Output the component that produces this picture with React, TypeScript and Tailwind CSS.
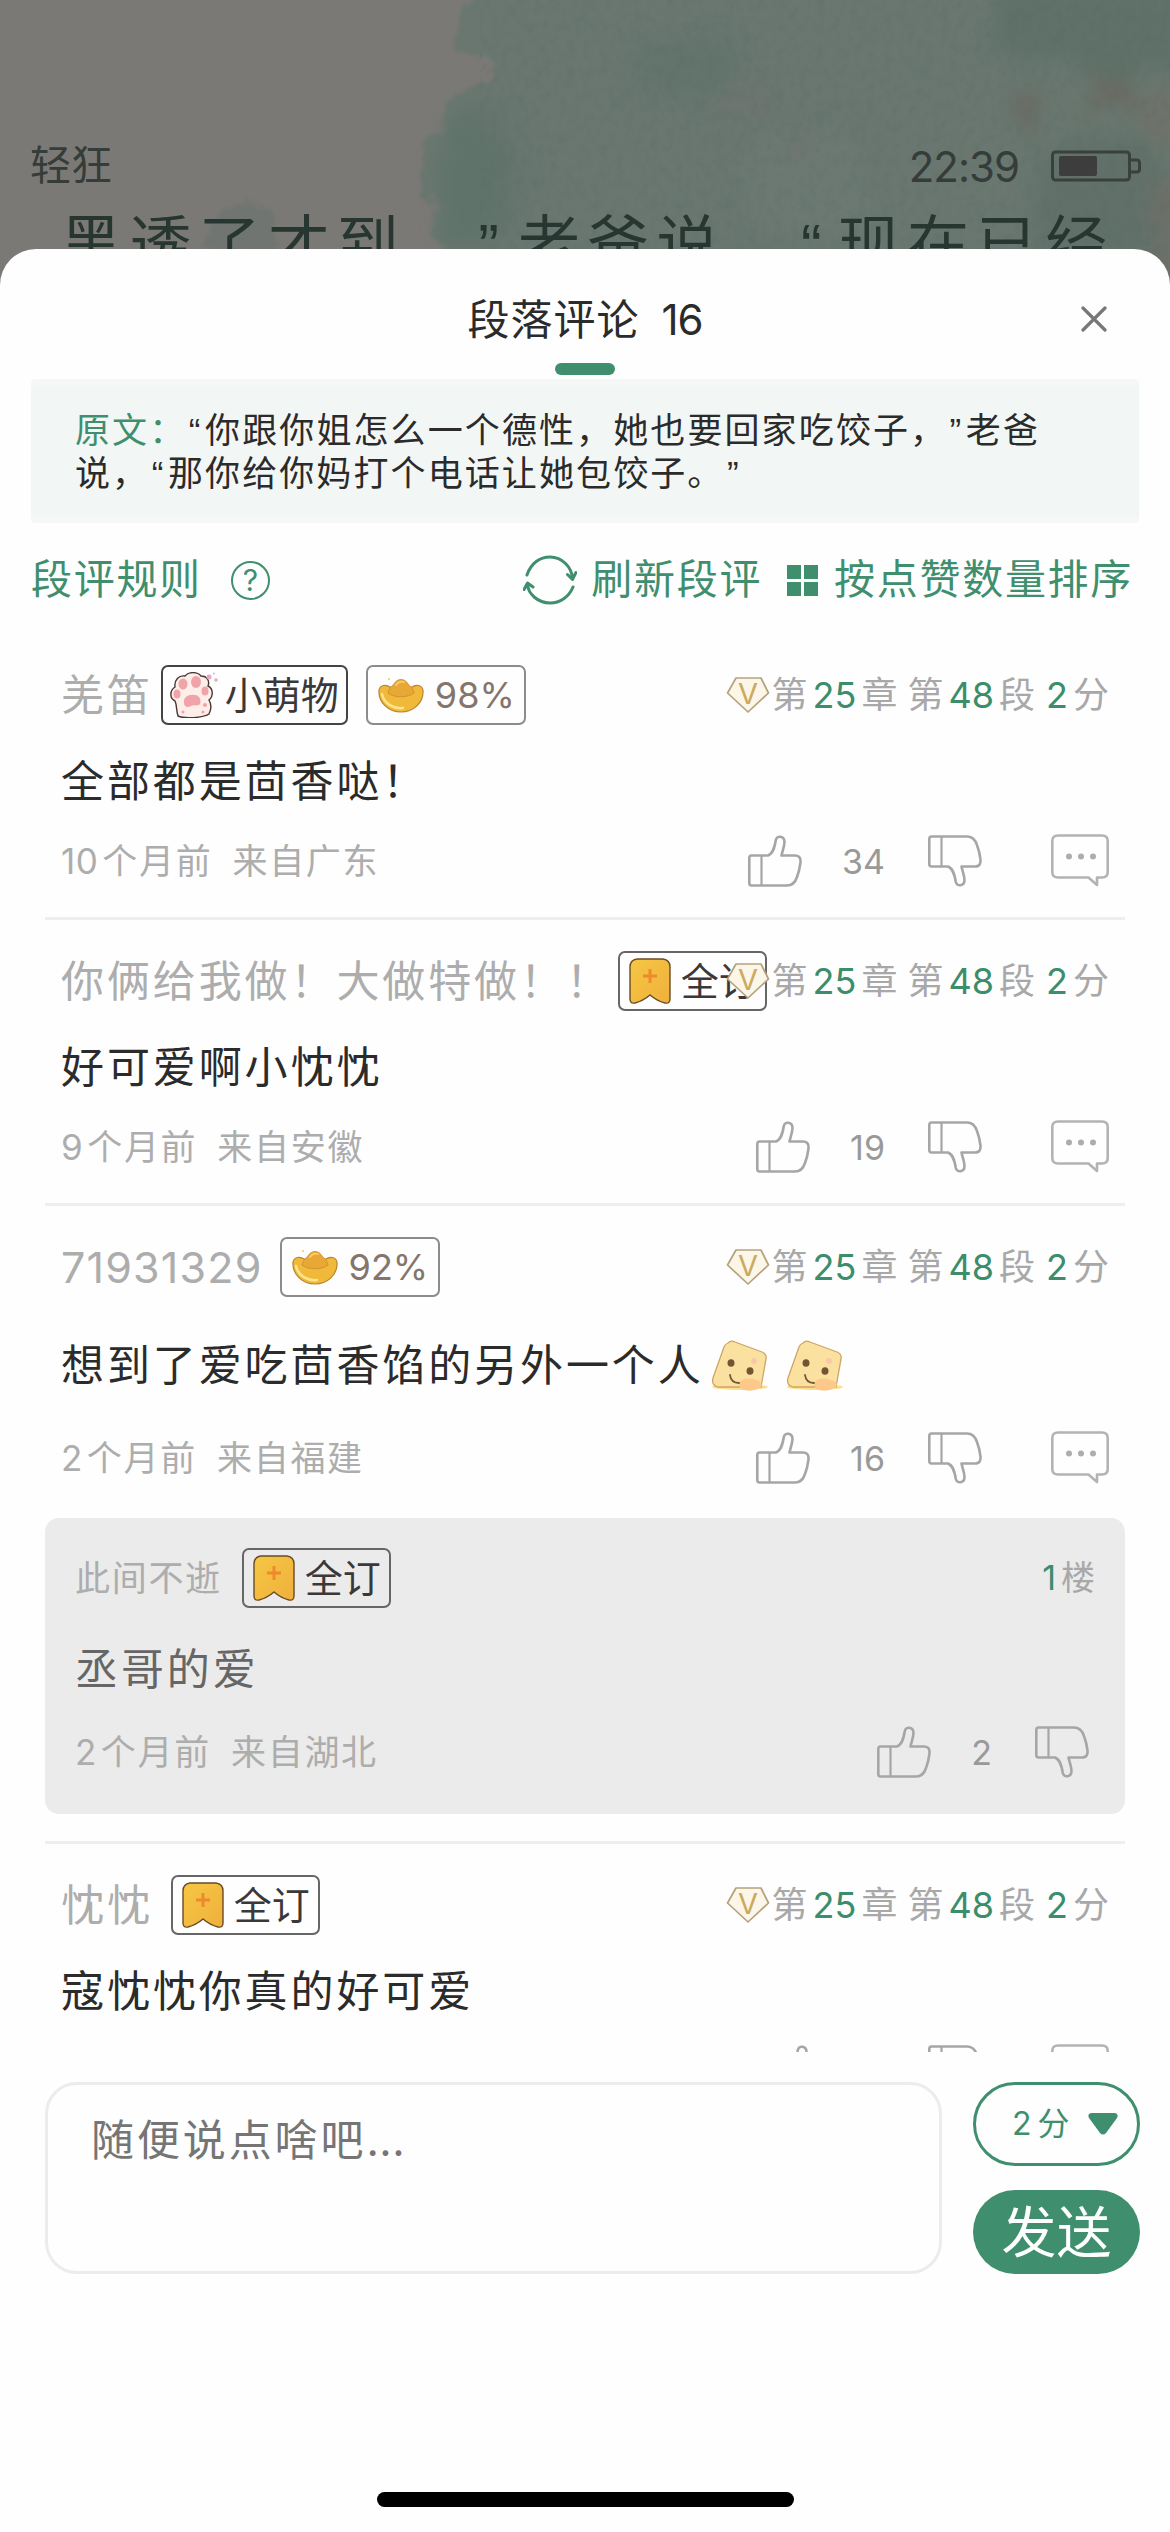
import type { ReactNode } from "react";

type TagKind = "paw" | "ingot" | "bookmark";

interface Tag {
    kind: TagKind;
    label: string;
}

interface Comment {
    name: string;
    tagGap: string;
    tags: Tag[];
    text: string;
    faces?: number;
    months: number;
    place: string;
    likes: number;
    reply?: Comment;
}

const comments: Comment[] = [
    {
        name: "羌笛",
        tagGap: "ml-2",
        tags: [{ kind: "paw", label: "小萌物" }, { kind: "ingot", label: "98%" }],
        text: "全部都是茴香哒！",
        months: 10,
        place: "广东",
        likes: 34,
    },
    {
        name: "你俩给我做！大做特做！！",
        tagGap: "ml-[6px]",
        tags: [{ kind: "bookmark", label: "全订" }],
        text: "好可爱啊小忱忱",
        months: 9,
        place: "安徽",
        likes: 19,
    },
    {
        name: "71931329",
        tagGap: "ml-[17px]",
        tags: [{ kind: "ingot", label: "92%" }],
        text: "想到了爱吃茴香馅的另外一个人",
        faces: 2,
        months: 2,
        place: "福建",
        likes: 16,
        reply: {
            name: "此间不逝",
            tagGap: "ml-[20px]",
            tags: [{ kind: "bookmark", label: "全订" }],
            text: "丞哥的爱",
            months: 2,
            place: "湖北",
            likes: 2,
        },
    },
    {
        name: "忱忱",
        tagGap: "ml-[18px]",
        tags: [{ kind: "bookmark", label: "全订" }],
        text: "寇忱忱你真的好可爱",
        months: 1,
        place: "江苏",
        likes: 9,
    },
];

const ThumbUp = ({ className = "" }: { className?: string }) => (
    <svg viewBox="0 0 54 52" className={`h-[52px] w-[54px] shrink-0 ${className}`} fill="none" stroke="#a6a6a6" strokeWidth="2.6" strokeLinejoin="round">
        <path d="M3.5 20.5H20C25 18.5 26.5 13 27.8 5C28.8 0 36.5 0.8 36.5 7C36.3 12 34.5 15.5 33.5 20.5H47C51.5 20.5 53 23.5 52.4 28C51.8 33 50.5 38 49 42C47.2 47.5 44.5 50.5 39 50.5H3.5Q1.3 50.5 1.3 48V23Q1.3 20.5 3.5 20.5Z" />
        <path d="M13.5 20.5V50.5" strokeWidth="2.2" />
    </svg>
);

const ThumbDown = () => <ThumbUp className="-scale-y-100" />;

const Bubble = () => (
    <svg viewBox="0 0 58 54" className="h-[54px] w-[58px] shrink-0" fill="none" stroke="#b3b3b3" strokeWidth="2.6">
        <path d="M7 1.5H51Q56.7 1.5 56.7 7V38Q56.7 43.5 51 43.5H46V51L37.5 43.5H7Q1.3 43.5 1.3 38V7Q1.3 1.5 7 1.5Z" strokeLinejoin="round" />
        <g fill="#adadad" stroke="none">
            <circle cx="18" cy="22.5" r="3" />
            <circle cx="30" cy="22.5" r="3" />
            <circle cx="42" cy="22.5" r="3" />
        </g>
    </svg>
);

const Paw = () => (
    <svg viewBox="0 0 49 46" className="mr-[6px] h-[46px] w-[49px]">
        <path d="M8 44C6 38 7 33 5 29C-1 26 0 18 5 15C4 8 9 3 15 4C19 -1 28 0 31 4C37 4 40 9 38 14C44 17 43 25 39 28C42 33 41 38 39 42C33 46 14 47 8 44Z" fill="#fdeeea" stroke="#4a3434" strokeWidth="1.4" />
        <g fill="#f0a3a8">
            <ellipse cx="13" cy="12" rx="4.5" ry="5.5" />
            <ellipse cx="26" cy="10" rx="5" ry="6" />
            <ellipse cx="7" cy="22" rx="3.5" ry="4.5" />
            <ellipse cx="35" cy="19" rx="3.5" ry="4.5" />
            <path d="M14 31C13 25 19 22 24 23C29 22 32 28 30 32C27 35 23 32 21 34C18 36 14 35 14 31Z" />
            <circle cx="35" cy="33" r="2" />
            <circle cx="33" cy="40" r="1.5" />
            <circle cx="13" cy="40" r="1.5" />
        </g>
        <g fill="#e3a9c6">
            <circle cx="39" cy="5" r="2.5" />
            <circle cx="46" cy="8" r="1.8" />
            <circle cx="44" cy="1.5" r="1" />
        </g>
    </svg>
);

const Ingot = () => (
    <svg viewBox="0 0 46 36" className="mr-[11px] h-[36px] w-[46px]">
        <path d="M1 13C2 8 8 7 12 10H34C38 7 44 8 45 13C46 26 35 35 23 35C11 35 0 26 1 13Z" fill="#f0b93a" stroke="#bb8430" strokeWidth="1.2" />
        <path d="M10 16C11 11 14 9 16 7C19 1 27 1 30 7C32 9 35 11 36 16C30 21 16 21 10 16Z" fill="#e8a835" stroke="#c98a2b" strokeWidth="0.8" />
        <path d="M4 17C6 27 16 32 25 31" fill="none" stroke="#fde58c" strokeWidth="2.5" strokeLinecap="round" />
        <path d="M18 8C20 5 23 4 26 5" fill="none" stroke="#f8cf6b" strokeWidth="1.8" strokeLinecap="round" />
        <circle cx="11" cy="2" r="1" fill="#f3c65c" />
    </svg>
);

const Bookmark = () => (
    <svg viewBox="0 0 42 46" className="mr-[10px] h-[46px] w-[42px]">
        <defs>
            <linearGradient id="mark" x1="0" x2="1" y1="0" y2="1">
                <stop offset="0" stopColor="#f6c744" />
                <stop offset="1" stopColor="#efb03c" />
            </linearGradient>
        </defs>
        <path d="M8 1H34Q41 2 41 9V41Q41 46 36 45Q28 43 21 37Q14 43 6 45Q1 46 1 41V9Q1 2 8 1Z" fill="url(#mark)" stroke="#6b4a26" strokeWidth="1.4" />
        <path d="M21 11V25M14 18H28" stroke="#ee8a2c" strokeWidth="3" />
    </svg>
);

const Face = () => (
    <svg viewBox="0 0 58 52" className="h-[52px] w-[58px]">
        <ellipse cx="29" cy="47" rx="28" ry="3" fill="#fbdf8f" />
        <path d="M17 3Q20 0 24 2L51 12Q56 14 55 19L50 47H7Q0 45 2 38L13 7Q14 4 17 3Z" fill="#fbe1a0" stroke="#cfa565" strokeWidth="1.3" />
        <path d="M27 43Q34 36 45 40Q54 43 49 48Q40 53 30 49Z" fill="#fcc98b" />
        <ellipse cx="20" cy="23" rx="3.5" ry="3.8" fill="#745532" />
        <ellipse cx="39" cy="31" rx="3.5" ry="3.8" fill="#745532" />
        <path d="M19 35Q20 43 28 43" fill="none" stroke="#745532" strokeWidth="1.8" strokeLinecap="round" />
        <circle cx="43" cy="21" r="3" fill="#f9c8a6" />
    </svg>
);

const Gem = () => (
    <svg viewBox="0 0 44 38" className="h-[38px] w-[44px]">
        <path d="M10 2H35L42.5 17L22 36L1.5 17Z" fill="#fbf6e8" stroke="#b5a27c" strokeWidth="1.7" strokeLinejoin="round" />
        <text x="22" y="28" textAnchor="middle" fontSize="29" fontFamily="Inter" fill="#ccaa5c">V</text>
    </svg>
);

const tagIcons: Record<TagKind, ReactNode> = {
    paw: <Paw />,
    ingot: <Ingot />,
    bookmark: <Bookmark />,
};

const tagStyles: Record<TagKind, string> = {
    paw: "w-[187px] border-[#444] pl-[7px] text-[38px] text-[#3c3838]",
    ingot: "w-[160px] border-[#8c8c8c] pl-[10px] text-[36px] text-[#85756a]",
    bookmark: "w-[149px] border-[#666] pl-[9px] text-[38px] text-[#3c3838]",
};

const TagBadge = ({ kind, label }: Tag) => (
    <span className={`flex h-[60px] shrink-0 items-center rounded-[7px] border-2 leading-none whitespace-nowrap ${tagStyles[kind]}`}>
        {tagIcons[kind]}
        {label}
    </span>
);

const Num = ({ children }: { children: ReactNode }) => <span className="mx-[5px] text-[#3b8d6c]">{children}</span>;

const Chapter = () => (
    <div className="z-10 col-start-1 row-start-1 flex items-center justify-self-end text-[36px] leading-none text-[#a8a8a8]">
        <Gem />
        <span className="ml-[2px]">第</span>
        <Num>25</Num>
        <span>章</span>
        <span className="ml-[10px]">第</span>
        <Num>48</Num>
        <span>段</span>
        <span className="ml-[6px]"><Num>2</Num></span>
        <span>分</span>
    </div>
);

const nameStyle = (name: string, isReply: boolean) => {
    if (isReply) return "text-[35px] tracking-[1.7px]";
    return /^\d+$/.test(name) ? "text-[43px] tracking-[1.2px]" : "text-[43px] tracking-[2.9px]";
};

const textStyle = (comment: Comment, isReply: boolean) => {
    if (isReply) return "mt-[32px] h-[58px] text-[#666]";
    return comment.faces ? "mt-[27px] h-[83px] text-[#2b2b2b]" : "mt-[27px] h-[58px] text-[#2b2b2b]";
};

const CommentBody = ({ comment, isReply = false }: { comment: Comment; isReply?: boolean }) => (
    <>
        <div className="grid h-[60px] grid-cols-1 grid-rows-[60px] items-center">
            <div className="col-start-1 row-start-1 flex items-center">
                <span className={`leading-none whitespace-nowrap text-[#adadad] ${nameStyle(comment.name, isReply)}`}>
                    {comment.name}
                </span>
                <div className={`flex gap-[18px] ${comment.tagGap}`}>
                    {comment.tags.map((tag) => <TagBadge key={tag.label} {...tag} />)}
                </div>
            </div>
            {isReply ? (
                <div className="col-start-1 row-start-1 justify-self-end text-[34px] leading-none text-[#a8a8a8]">
                    <Num>1</Num>楼
                </div>
            ) : <Chapter />}
        </div>
        <div className={`flex items-center text-[43px] tracking-[2.9px] ${textStyle(comment, isReply)}`}>
            {comment.text}
            {comment.faces && (
                <span className="ml-[7px] flex gap-[17px]">
                    {Array.from({ length: comment.faces }, (_, i) => <Face key={i} />)}
                </span>
            )}
        </div>
        <div className={`flex h-[52px] items-center ${isReply ? "mt-[28px] pr-[6px]" : "mt-[25px]"}`}>
            <div className="flex text-[35px] tracking-[1.7px] text-[#adadad]">
                <span className="tracking-[0.5px]">{comment.months}</span>
                <span className="ml-[4px]">个月前</span>
                <span className="ml-[20px]">来自{comment.place}</span>
            </div>
            <div className="ml-auto flex items-center">
                <ThumbUp />
                <span className="mr-[43px] ml-[40px] text-[34px] text-[#999]">{comment.likes}</span>
                <ThumbDown />
                {!isReply && <span className="ml-[69px]"><Bubble /></span>}
            </div>
        </div>
    </>
);

const CommentItem = ({ comment }: { comment: Comment }) => (
    <article className="border-b-[3px] border-[#eee] pt-[31px] pb-[30px]">
        <div className="px-4">
            <CommentBody comment={comment} />
        </div>
        {comment.reply && (
            <div className="mt-[34px] -mb-[3px] h-[296px] rounded-[14px] bg-[#ebebeb] px-[30px] pt-[30px]">
                <CommentBody comment={comment.reply} isReply />
            </div>
        )}
    </article>
);

// watercolour page background, already dimmed by the sheet's overlay
const PaperArt = () => (
    <svg viewBox="0 0 1170 300" className="absolute inset-0 h-[300px] w-full" preserveAspectRatio="none">
        <defs>
            <filter id="rough" x="-5%" y="-5%" width="110%" height="110%" colorInterpolationFilters="sRGB">
                <feTurbulence type="fractalNoise" baseFrequency="0.05" numOctaves="4" seed="4" result="n" />
                <feDisplacementMap in="SourceGraphic" in2="n" scale="24" xChannelSelector="R" yChannelSelector="G" />
                <feGaussianBlur stdDeviation="1.5" />
            </filter>
            <filter id="soft" x="-40%" y="-40%" width="180%" height="180%" colorInterpolationFilters="sRGB">
                <feTurbulence type="fractalNoise" baseFrequency="0.05" numOctaves="3" seed="9" result="n" />
                <feDisplacementMap in="SourceGraphic" in2="n" scale="50" xChannelSelector="R" yChannelSelector="G" />
                <feGaussianBlur stdDeviation="8" />
            </filter>
            <filter id="grain" x="0" y="0" width="100%" height="100%" colorInterpolationFilters="sRGB">
                <feTurbulence type="fractalNoise" baseFrequency="0.12 0.09" numOctaves="3" seed="2" />
                <feColorMatrix values="0 0 0 0 0.34  0 0 0 0 0.42  0 0 0 0 0.39  1.6 0 0 0 -0.7" />
            </filter>
        </defs>
        <rect width="1170" height="300" fill="#7a7976" />
        <path d="M215 222Q240 190 268 205L280 252H200Z" fill="#717572" filter="url(#rough)" />
        <path d="M470 -20L465 8L452 30L456 50L476 54L492 62L488 80L466 90L448 106L446 128L420 142L428 166L416 194L440 202L434 240L450 262V310H1200V-20Z" fill="#697770" filter="url(#rough)" />
        <g filter="url(#soft)">
            <path d="M450 120L490 105L520 180L490 250L445 240L435 185Z" fill="#60736b" />
            <path d="M640 40L740 50L710 100L640 85Z" fill="#62746c" />
            <path d="M730 150L850 120L880 230L760 240Z" fill="#6c7973" />
            <path d="M990 -10H1180V60L1110 80L1050 50L1000 60Z" fill="#5f7169" />
            <path d="M1040 150L1150 130L1170 260H1030Z" fill="#61716a" />
            <path d="M720 90L760 90L765 110L735 112Z" fill="#6f7570" />
            <path d="M780 135L815 140L810 160L785 155Z" fill="#707570" />
            <path d="M1090 75L1140 80L1125 115L1095 110Z" fill="#6a6b62" />
            <path d="M1015 95L1040 90L1040 130L1015 125Z" fill="#6a6c65" />
            <path d="M1135 105L1175 90V140H1145Z" fill="#70726b" />
            <path d="M1150 190L1180 180V270H1150Z" fill="#6d6f69" />
        </g>
        <rect x="480" width="690" height="300" filter="url(#grain)" opacity="0.4" />
    </svg>
);

// curly quotes, narrower than a full-width mark
const Quote = ({ children, className }: { children: string; className: string }) => (
    <span className={`font-['Liberation_Sans'] ${className}`}>{children}</span>
);

const Reader = () => (
    <div className="relative h-[285px] overflow-hidden bg-[#7a7976]">
        <PaperArt />
        <div className="relative flex h-full flex-col pt-[136px]">
            <div className="flex h-[60px] items-center px-[30px] text-[#353c39]">
                <span className="text-[41px]">轻狂</span>
                <span className="ml-auto text-[42px] tracking-[-1px]">22:39</span>
                <svg viewBox="0 0 90 32" className="mr-[-1px] ml-[32px] h-[32px] w-[90px]" fill="none" stroke="#3a403d" strokeWidth="3">
                    <rect x="1.5" y="2" width="77" height="28" rx="3" />
                    <path d="M79 10H86Q88.5 10 88.5 13V19Q88.5 22 86 22H79" />
                    <rect x="8" y="6" width="38" height="20" rx="2" fill="#3d3d3d" stroke="none" />
                </svg>
            </div>
            <p className="mt-[13px] pl-[60px] text-[62px] leading-[72px] tracking-[7.2px] whitespace-nowrap text-[#273631] [text-spacing-trim:space-all]">
                黑透了才到。<Quote className="pr-[12px] pl-[3px]">”</Quote>老爸说，<Quote className="pr-[9px] pl-[6px]">“</Quote>现在已经
            </p>
        </div>
    </div>
);

const RefreshIcon = () => (
    <svg viewBox="0 0 54 50" className="mr-[14px] h-[50px] w-[54px]" fill="none" stroke="#3f8f6e" strokeWidth="3" strokeLinecap="round" strokeLinejoin="round">
        <path d="M4 20C8 8 17 2 27 2C39 2 49 12 49.5 24M44.5 19.5L49.5 24.5L53 17.5" />
        <path d="M50 32C46 42 37 48 27 48C15 48 5 39 4.5 29M1 34.5L4.5 28L10 32" />
    </svg>
);

const Toolbar = () => (
    <div className="mt-[27px] flex h-[60px] items-center pr-[37px] pl-[31px] text-[41px] tracking-[1.7px] text-[#3f8f6e]">
        <span>段评规则</span>
        <span className="ml-[29px] flex size-[39px] items-center justify-center rounded-full border-2 border-[#3f8f6e] text-[30px] leading-none tracking-normal">?</span>
        <span className="ml-auto flex items-center">
            <RefreshIcon />
            刷新段评
        </span>
        <span className="mr-[16px] ml-[25px] grid grid-cols-2 gap-[3px]">
            <i className="h-[14px] w-[14px] bg-[#3f8f6e]" />
            <i className="h-[14px] w-[14px] bg-[#3f8f6e]" />
            <i className="h-[14px] w-[14px] bg-[#3f8f6e]" />
            <i className="h-[14px] w-[14px] bg-[#3f8f6e]" />
        </span>
        <span>按点赞数量排序</span>
    </div>
);

const Composer = () => (
    <div className="flex gap-[31px] pr-[30px] pl-[45px]">
        <div className="h-[192px] w-[897px] rounded-[32px] border-[3px] border-[#ececec] px-[43px] pt-[25px] text-[43px] leading-[60px] tracking-[2.9px] text-[#757575]">
            随便说点啥吧<span className="tracking-[0.5px]">...</span>
        </div>
        <div className="flex flex-1 flex-col justify-between">
            <div className="flex h-[84px] items-center rounded-full border-[3px] border-[#3f8f6e] pl-[36px] text-[32px] tracking-[2px] text-[#3f8f6e]">
                <span className="flex gap-[4px]"><span>2</span>分</span>
                <svg viewBox="0 0 30 22" className="ml-[16px] h-[22px] w-[30px]" fill="#3f8f6e">
                    <path d="M3 0H27Q31 1 29 5L18 20Q15 23 12 20L1 5Q-1 1 3 0Z" />
                </svg>
            </div>
            <button className="h-[84px] rounded-full bg-[#3f8f6e] text-[55px] leading-none text-white">发送</button>
        </div>
    </div>
);

export default function App() {
    return (
        <div className="flex h-[2532px] w-[1170px] flex-col overflow-hidden bg-white font-['Inter','Noto_Sans_CJK_SC',sans-serif]">
            <Reader />
            <section className="relative -mt-[36px] flex flex-1 flex-col rounded-t-[36px] bg-[#fefefe]">
                <header className="grid h-[114px] grid-cols-[1fr_auto_1fr] items-center pt-[26px]">
                    <h1 className="col-start-2 flex gap-[22px] text-[42px] tracking-[1px] text-[#2b2b2b]">
                        <span>段落评论</span>
                        <span className="tracking-[-1px]">16</span>
                    </h1>
                    <svg viewBox="0 0 26 26" className="mr-[63px] size-[26px] justify-self-end" stroke="#777" strokeWidth="3.2" strokeLinecap="round">
                        <path d="M2 2L24 24M24 2L2 24" />
                    </svg>
                </header>
                <div className="mx-auto h-[12px] w-[60px] rounded-[6px] bg-[#3f8f6e]" />
                <blockquote className="mx-[31px] mt-[4px] h-[144px] rounded-[4px] border-y-[6px] border-[#f6f7f7] bg-[#f2f7f6] pt-[24px] pl-[44px] text-[35px] leading-[42px] tracking-[2.1px] text-[#2b2b2b] [text-spacing-trim:space-all]">
                    <span className="text-[#3f8f6e]">原文：</span><Quote className="px-[2.5px]">“</Quote>你跟你姐怎么一个德性，她也要回家吃饺子，<Quote className="px-[2.5px]">”</Quote>老爸
                    <br />
                    说，<Quote className="px-[2.5px]">“</Quote>那你给你妈打个电话让她包饺子。<Quote className="px-[2.5px]">”</Quote>
                </blockquote>
                <Toolbar />
                <main className="mx-[45px] mt-[24px] h-[1418px] overflow-hidden">
                    {comments.map((comment) => <CommentItem key={comment.name} comment={comment} />)}
                </main>
                <div className="mt-[30px]">
                    <Composer />
                </div>
                <div className="mx-auto mt-auto mb-[25px] h-[15px] w-[417px] rounded-full bg-black" />
            </section>
        </div>
    );
}
